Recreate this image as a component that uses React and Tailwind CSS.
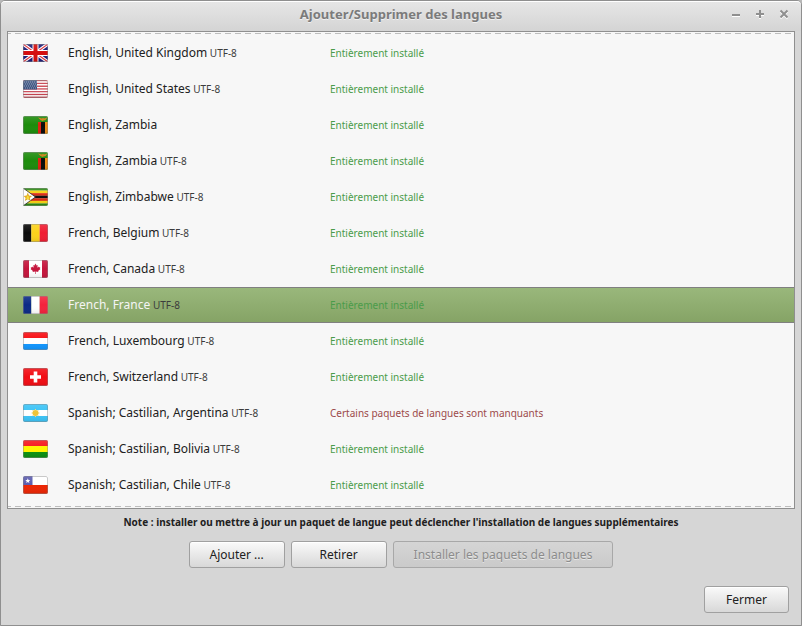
import React from 'react';

const LANGUAGES = [
  { flag: 'gb', name: 'English, United Kingdom', charset: 'UTF-8' },
  { flag: 'us', name: 'English, United States', charset: 'UTF-8' },
  { flag: 'zm', name: 'English, Zambia' },
  { flag: 'zm', name: 'English, Zambia', charset: 'UTF-8' },
  { flag: 'zw', name: 'English, Zimbabwe', charset: 'UTF-8' },
  { flag: 'be', name: 'French, Belgium', charset: 'UTF-8' },
  { flag: 'ca', name: 'French, Canada', charset: 'UTF-8' },
  { flag: 'fr', name: 'French, France', charset: 'UTF-8', selected: true },
  { flag: 'lu', name: 'French, Luxembourg', charset: 'UTF-8' },
  { flag: 'ch', name: 'French, Switzerland', charset: 'UTF-8' },
  { flag: 'ar', name: 'Spanish; Castilian, Argentina', charset: 'UTF-8', missing: true },
  { flag: 'bo', name: 'Spanish; Castilian, Bolivia', charset: 'UTF-8' },
  { flag: 'cl', name: 'Spanish; Castilian, Chile', charset: 'UTF-8' },
];

const stripes = (colors) =>
  colors.map((c, i) => (
    <rect key={i} x="0" y={(i * 18) / colors.length} width="25" height={18 / colors.length + 0.1} fill={c} />
  ));

const bands = (colors) =>
  colors.map((c, i) => (
    <rect key={i} x={(i * 25) / colors.length} y="0" width={25 / colors.length + 0.1} height="18" fill={c} />
  ));

const FLAGS = {
  gb: (
    <>
      <rect width="25" height="18" fill="#1c1c78" />
      <path d="M0 0L25 18M25 0L0 18" stroke="#fff" strokeWidth="3.4" />
      <path d="M0 0L25 18M25 0L0 18" stroke="#e0303a" strokeWidth="1.1" />
      <path d="M12.5 0V18M0 9H25" stroke="#fff" strokeWidth="6" />
      <path d="M12.5 0V18M0 9H25" stroke="#d40d0d" strokeWidth="4" />
    </>
  ),
  us: (
    <>
      {stripes(['#c8414e', '#fff', '#c8414e', '#fff', '#c8414e', '#fff', '#c8414e', '#fff', '#c8414e', '#fff', '#c8414e', '#fff', '#c8414e'])}
      <rect width="14" height="9.5" fill="#3b527f" />
      <path d="M1 2H14M2 4H14M1 6H14M2 8H14" stroke="#98a5bf" strokeWidth="0.9" strokeDasharray="1 1" />
    </>
  ),
  zm: (
    <>
      <rect width="25" height="18" fill="#1c8c0b" />
      <rect x="15" y="6" width="3" height="12" fill="#e02010" />
      <rect x="18" y="6" width="4" height="12" fill="#0a0a0a" />
      <rect x="22" y="6" width="3" height="12" fill="#f08a10" />
      <path d="M15 1.5L19 2.6L20 1.8L21 2.6L24.5 1.5L22.5 4L20.5 4.4L19.5 5L17.5 4Z" fill="#cf7a12" />
    </>
  ),
  zw: (
    <>
      {stripes(['#2b8a12', '#f6d211', '#dc2810', '#111', '#dc2810', '#f6d211', '#2b8a12'])}
      <path d="M0 0L12.5 9L0 18Z" fill="#fff" />
      <path d="M0 0L12.5 9L0 18" fill="none" stroke="#222" strokeWidth="0.8" />
      <path d="M4.8 4.5L6 7.5L9 8L6.8 10L7.8 13L4.8 11.3L1.8 13L2.6 10L0.6 8L3.6 7.5Z" fill="#e2ad22" />
      <path d="M4 7.5L6 8.5V11H3.4Z" fill="#f8dc35" />
    </>
  ),
  be: bands(['#0b0b0b', '#fbd21b', '#f01c31']),
  ca: (
    <>
      <rect width="25" height="18" fill="#fff" />
      <rect width="6" height="18" fill="#c5153c" />
      <rect x="19" width="6" height="18" fill="#c5153c" />
      <path
        d="M12.5 3.6L13.6 5.6L14.7 5.1L14.3 7.7L15.6 6.6L15.9 7.4L17.3 7.1L16.8 8.6L17.5 9L15.1 11L15.4 11.9L12.8 11.6V14H12.2V11.6L9.6 11.9L9.9 11L7.5 9L8.2 8.6L7.7 7.1L9.1 7.4L9.4 6.6L10.7 7.7L10.3 5.1L11.4 5.6Z"
        fill="#c5153c"
      />
    </>
  ),
  fr: bands(['#0b2a86', '#fff', '#f4223c']),
  lu: stripes(['#f80d12', '#fff', '#1196ff']),
  ch: (
    <>
      <rect width="25" height="18" fill="#f20d14" />
      <path d="M12.5 3.5V14.5M7 9H18" stroke="#fff" strokeWidth="3.6" />
    </>
  ),
  ar: (
    <>
      {stripes(['#3bc3f6', '#fff', '#3bc3f6'])}
      <path d="M12.5 5V13M8.5 9H16.5M9.7 6.2L15.3 11.8M15.3 6.2L9.7 11.8" stroke="#f3d878" strokeWidth="1" />
      <circle cx="12.5" cy="9" r="3" fill="#efc437" />
    </>
  ),
  bo: stripes(['#f6171c', '#fff500', '#0a9010']),
  cl: (
    <>
      <rect width="25" height="9" fill="#fff" />
      <rect y="9" width="25" height="9" fill="#ec2503" />
      <rect width="9.5" height="9" fill="#5b5cae" />
      <path d="M4.8 2.2L5.5 4L7.3 4.1L5.9 5.2L6.4 7L4.8 6L3.2 7L3.7 5.2L2.3 4.1L4.1 4Z" fill="#fff" />
    </>
  ),
};

function Flag({ code }) {
  return (
    <svg viewBox="0 0 25 18" className="block h-[18px] w-[25px] rounded-[2px]" aria-hidden="true">
      <defs>
        <linearGradient id="flag-shade" x1="0" y1="0" x2="0" y2="1">
          <stop offset="0" stopColor="#fff" stopOpacity="0.12" />
          <stop offset="0.5" stopColor="#fff" stopOpacity="0" />
          <stop offset="1" stopColor="#000" stopOpacity="0.08" />
        </linearGradient>
      </defs>
      {FLAGS[code]}
      <rect width="25" height="18" fill="url(#flag-shade)" />
      <rect x="0.5" y="0.5" width="24" height="17" rx="1.5" fill="none" stroke="#888" strokeOpacity="0.45" />
    </svg>
  );
}

function LanguageRow({ flag, name, charset, selected, missing }) {
  const line = selected ? 'border-[#808080]' : 'border-transparent';
  const cell = `h-9 border-y p-0 align-middle ${line}`;
  return (
    <tr aria-selected={!!selected} className={selected ? 'bg-linear-to-b from-[#9ab87c] to-[#85a365]' : ''}>
      <td className={`${cell} w-[60px] pl-[15px]`}>
        <Flag code={flag} />
      </td>
      <td className={`${cell} w-[262px] text-xs whitespace-nowrap ${selected ? 'text-[#f5f5f5]' : 'text-[#212121]'}`}>
        {name}
        {charset && <span className="text-[10px] text-[#3c3c3c]"> {charset}</span>}
      </td>
      <td className={`${cell} text-[10px] whitespace-nowrap ${missing ? 'text-[#9c4a4a]' : 'text-[#4a9c4a]'}`}>
        {missing ? 'Certains paquets de langues sont manquants' : 'Entièrement installé'}
      </td>
    </tr>
  );
}

function Button({ children, className = '', disabled }) {
  const look = disabled
    ? 'border-[#a8a8a8] bg-linear-to-b from-[#d5d5d5] to-[#cacaca] text-[#8c8c8c] [text-shadow:0_1px_#e6e6e6]'
    : 'border-[#a0a0a0] bg-linear-to-b from-[#fafafa] to-[#d8d8d8] text-[#212121] shadow-[inset_0_1px_#ffffff]';
  return (
    <button
      type="button"
      disabled={disabled}
      className={`h-[27px] rounded-[3px] border text-xs whitespace-nowrap ${look} ${className}`}
    >
      {children}
    </button>
  );
}

function WindowButton({ label, d }) {
  return (
    <button type="button" aria-label={label} className="flex size-4 items-center justify-center">
      <svg viewBox="0 0 16 16" className="size-4" fill="none" strokeWidth="2">
        <path d={d} stroke="#ffffff" transform="translate(0 1)" />
        <path d={d} stroke="#8f8f8f" />
      </svg>
    </button>
  );
}

const DASHES =
  'h-px bg-[repeating-linear-gradient(90deg,#bdbdbd_0_3px,transparent_3px_7px,#bdbdbd_7px_10px)]';

export default function App() {
  return (
    <div className="min-h-screen bg-[#b9b9b9] font-['Noto_Sans','Liberation_Sans',sans-serif] text-[#212121]">
      <div className="flex min-h-screen flex-col rounded-t-[5px] border border-[#8f8f8f] bg-[#d6d6d6]">
        <header className="grid h-[30px] grid-cols-[1fr_auto_1fr] items-center rounded-t-[4px] border-t border-white bg-linear-to-b from-[#e6e6e6] to-[#d4d4d4] px-[9px] pb-1.5">
          <h1 className="col-start-2 text-[13px] leading-5 font-bold text-[#7b7b7b] [text-shadow:0_1px_#f0f0f0]">
            Ajouter/Supprimer des langues
          </h1>
          <div className="flex gap-2 justify-self-end">
            <WindowButton label="Réduire" d="M4 9H12" />
            <WindowButton label="Agrandir" d="M4 8H12M8 4V12" />
            <WindowButton label="Fermer la fenêtre" d="M4.5 4.5L11.5 11.5M11.5 4.5L4.5 11.5" />
          </div>
        </header>

        <main className="flex grow flex-col px-1.5">
          <div className="border border-[#8f8f8f] bg-[#f7f7f7] pt-px pb-px">
            <div className={DASHES} />
            <table className="mt-px mb-[3px] w-full table-fixed border-separate border-spacing-0">
              <colgroup>
                <col className="w-[60px]" />
                <col className="w-[262px]" />
                <col />
              </colgroup>
              <tbody>
                {LANGUAGES.map((language, i) => (
                  <LanguageRow key={i} {...language} />
                ))}
              </tbody>
            </table>
            <div className={DASHES} />
          </div>

          <p className="mt-[5px] text-center text-[10px] leading-4 font-bold">
            Note : installer ou mettre à jour un paquet de langue peut déclencher l'installation de langues supplémentaires
          </p>

          <div className="mt-[11px] flex justify-center gap-1.5">
            <Button className="w-24">Ajouter ...</Button>
            <Button className="w-24">Retirer</Button>
            <Button disabled className="px-5">
              Installer les paquets de langues
            </Button>
          </div>

          <div className="mt-[18px] mb-3 flex justify-end pr-1.5">
            <Button className="w-[85px]">Fermer</Button>
          </div>
        </main>
      </div>
    </div>
  );
}
